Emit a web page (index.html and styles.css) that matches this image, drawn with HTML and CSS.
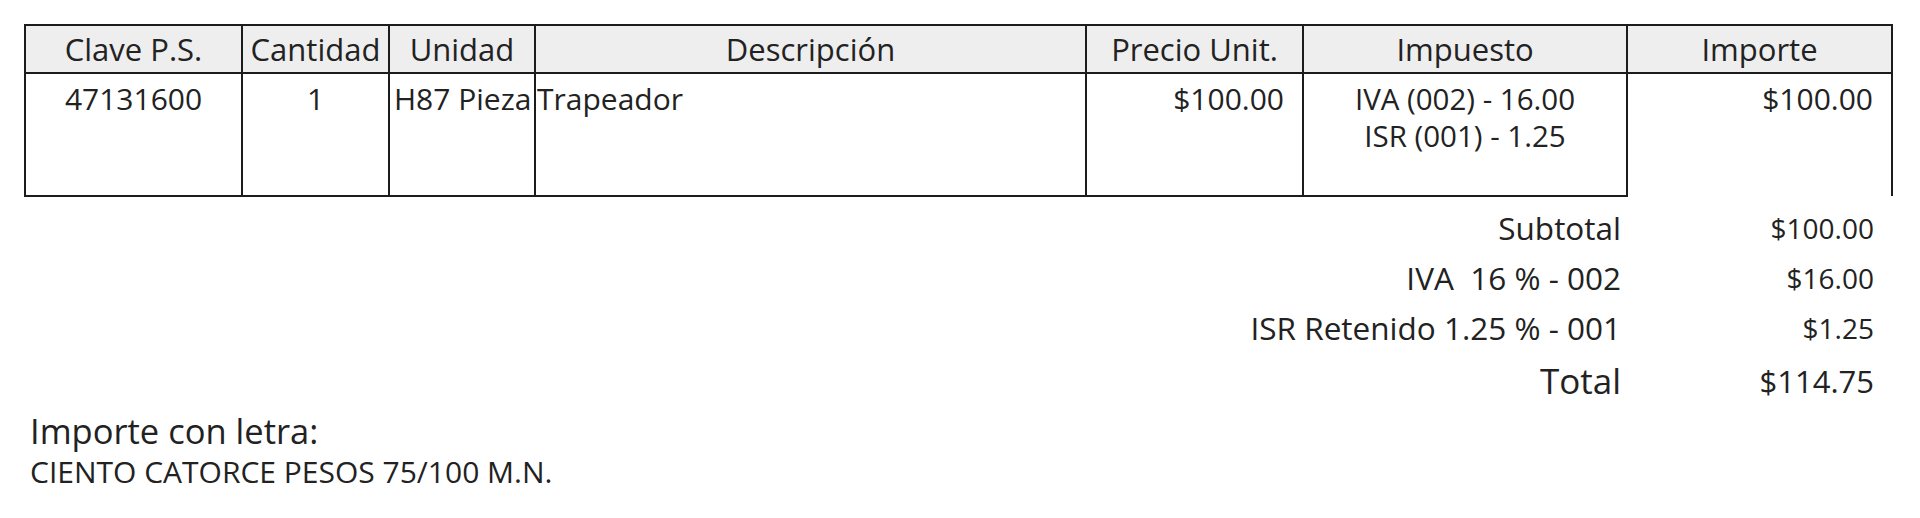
FILE: index.html
```html
<!DOCTYPE html>
<html lang="es">
<head>
<meta charset="utf-8">
<title>Conceptos</title>
<link rel="stylesheet" href="styles.css">
</head>
<body>
<div class="page">
  <table class="items">
    <colgroup>
      <col class="c-clave">
      <col class="c-cant">
      <col class="c-unidad">
      <col class="c-desc">
      <col class="c-precio">
      <col class="c-imp">
      <col class="c-importe">
    </colgroup>
    <thead>
      <tr>
        <th>Clave P.S.</th>
        <th>Cantidad</th>
        <th>Unidad</th>
        <th>Descripción</th>
        <th>Precio Unit.</th>
        <th>Impuesto</th>
        <th>Importe</th>
      </tr>
    </thead>
    <tbody>
      <tr>
        <td class="center">47131600</td>
        <td class="center">1</td>
        <td class="unit">H87 Pieza</td>
        <td class="desc">Trapeador</td>
        <td class="right">$100.00</td>
        <td class="center tax">IVA (002) - 16.00<br>ISR (001) - 1.25</td>
        <td class="right open">$100.00</td>
      </tr>
    </tbody>
  </table>

  <div class="totals">
    <div class="t-label">Subtotal</div>
    <div class="t-value">$100.00</div>
    <div class="t-label">IVA&nbsp; 16 % - 002</div>
    <div class="t-value">$16.00</div>
    <div class="t-label">ISR Retenido 1.25 % - 001</div>
    <div class="t-value">$1.25</div>
    <div class="t-label grand">Total</div>
    <div class="t-value grand">$114.75</div>
  </div>

  <div class="letra">
    <div class="letra-title">Importe con letra:</div>
    <div class="letra-text">CIENTO CATORCE PESOS 75/100 M.N.</div>
  </div>
</div>
</body>
</html>
```

FILE: styles.css
```css
html, body {
  margin: 0;
  padding: 0;
  background: #ffffff;
}

body {
  font-family: "Open Sans", "Noto Sans", sans-serif;
  color: #222222;
  width: 1920px;
  height: 518px;
  overflow: hidden;
}

.page {
  padding: 24px 0 0 24px;
  width: 1869px;
}

.items {
  border-collapse: collapse;
  table-layout: fixed;
  width: 1869px;
}

.c-clave { width: 217px; }
.c-cant { width: 147px; }
.c-unidad { width: 146px; }
.c-desc { width: 551px; }
.c-precio { width: 217px; }
.c-imp { width: 324px; }
.c-importe { width: 265px; }

.items th {
  height: 46px;
  padding: 0;
  background: #eeeeee;
  border: 2px solid #1c1c1c;
  font-weight: 400;
  font-size: 31px;
  text-align: center;
  vertical-align: middle;
  white-space: nowrap;
  line-height: 46px;
}

.items td {
  height: 115px;
  padding: 6px 0 0 0;
  border: 2px solid #1c1c1c;
  font-size: 30px;
  line-height: 37px;
  vertical-align: top;
  white-space: nowrap;
  overflow: hidden;
}

.items td.center { text-align: center; }
.items td.right { text-align: right; padding-right: 18px; }
.items td.unit { padding-left: 4px; text-align: left; }
.items td.desc { padding-left: 1px; text-align: left; }
.items td.tax { font-size: 29.5px; }
.items td.open { border-bottom: none; }

.totals {
  display: grid;
  grid-template-columns: 1fr 246px;
  column-gap: 7px;
  padding-top: 6px;
  padding-right: 19px;
}

.t-label,
.t-value {
  height: 50px;
  line-height: 50px;
  text-align: right;
  white-space: nowrap;
}

.t-label { font-size: 31.5px; }
.t-value { font-size: 28px; }

.t-label.grand {
  height: 56px;
  line-height: 56px;
  font-size: 35px;
}

.t-value.grand {
  height: 56px;
  line-height: 56px;
  font-size: 31px;
}

.letra {
  padding-left: 6px;
}

.letra-title {
  font-size: 34.5px;
  line-height: 43px;
}

.letra-text {
  font-size: 30px;
  line-height: 40px;
}
```
